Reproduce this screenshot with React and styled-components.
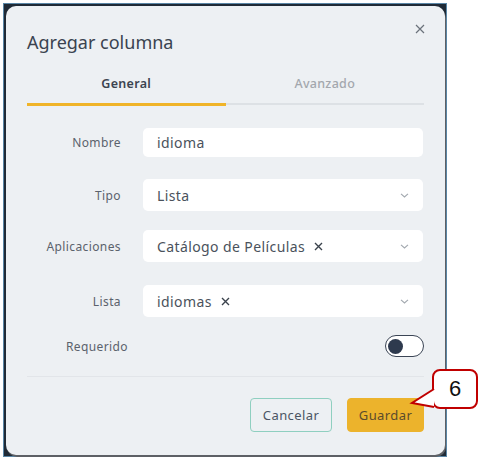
import React from 'react';
import styled, { createGlobalStyle } from 'styled-components';

const GlobalStyle = createGlobalStyle`
  html, body {
    margin: 0;
    padding: 0;
    background: #ffffff;
  }
  body {
    font-family: "Noto Sans", "DejaVu Sans", sans-serif;
  }
`;

const Stage = styled.div`
  position: relative;
  width: 483px;
  height: 464px;
  padding: 3px;
  box-sizing: border-box;
`;

const Backdrop = styled.div`
  width: 444px;
  height: 454px;
  box-sizing: border-box;
  background: #1f2a36;
  border: 1px solid #5a86a6;
  padding: 2px 1px 1px 2px;
`;

const Modal = styled.div`
  position: relative;
  height: 100%;
  box-sizing: border-box;
  background: #edf0f3;
  border-radius: 10px;
  box-shadow: 1px 2px 0 #5d6065;
  padding: 24px 21px 20px 21px;
  display: flex;
  flex-direction: column;
`;

const Title = styled.h2`
  margin: 0;
  font-size: 18px;
  font-weight: 400;
  color: #3a4350;
  line-height: 24px;
`;

const Close = styled.button`
  position: absolute;
  top: 16px;
  right: 18px;
  width: 14px;
  height: 14px;
  padding: 0;
  border: none;
  background: none;
  display: flex;
  align-items: center;
  justify-content: center;
`;

const Tabs = styled.div`
  display: flex;
  margin-top: 22px;
`;

const Tab = styled.div`
  flex: 1;
  text-align: center;
  font-size: 12.5px;
  letter-spacing: 0.3px;
  font-weight: ${({ $active }) => ($active ? 600 : 500)};
  color: ${({ $active }) => ($active ? '#3c4450' : '#a3a7ad')};
  padding-bottom: 11px;
  border-bottom: ${({ $active }) => ($active ? '3px solid #f0b429' : '2px solid #dde1e5')};
  margin-bottom: ${({ $active }) => ($active ? '0' : '1px')};
  line-height: 16px;
`;

const Form = styled.div`
  display: flex;
  flex-direction: column;
  margin-top: 22px;
`;

const Row = styled.div`
  display: grid;
  grid-template-columns: 94px 280px;
  column-gap: 22px;
  align-items: center;
  margin-bottom: ${({ $gap }) => $gap}px;
`;

const Label = styled.div`
  text-align: right;
  font-size: 12px;
  letter-spacing: 0.4px;
  color: #5b626c;
`;

const Field = styled.div`
  height: ${({ $h }) => $h || 32}px;
  background: #ffffff;
  border-radius: 5px;
  display: flex;
  align-items: center;
  padding: 0 14px;
  box-sizing: border-box;
  font-size: 14px;
  letter-spacing: 0.4px;
  color: #4a525c;
`;

const Value = styled.span`
  flex: 1;
  display: flex;
  align-items: center;
`;

const Chip = styled.span`
  display: inline-flex;
  align-items: center;
  gap: 9px;
`;

const ToggleRow = styled.div`
  display: flex;
  align-items: center;
  justify-content: space-between;
  height: 24px;
`;

const ToggleLabel = styled(Label)`
  width: 101px;
`;

const Switch = styled.div`
  width: 33px;
  height: 20px;
  border: 1px solid #3b4555;
  border-radius: 11px;
  background: #ffffff;
  display: flex;
  align-items: center;
  padding: 0 2px;
  box-sizing: content-box;
`;

const Knob = styled.div`
  width: 15px;
  height: 15px;
  border-radius: 50%;
  background: #2e3a4e;
`;

const Divider = styled.div`
  height: 1px;
  background: #e2e5e9;
  margin-top: 18px;
`;

const Footer = styled.div`
  display: flex;
  justify-content: flex-end;
  gap: 15px;
  margin-top: 21px;
`;

const Button = styled.button`
  height: 34px;
  padding: 0;
  border-radius: 4px;
  font-family: inherit;
  font-size: 13px;
  font-weight: 400;
  letter-spacing: 0.4px;
  box-sizing: border-box;
  border: 1px solid ${({ $primary }) => ($primary ? '#ecb32c' : '#8fcfc0')};
  background: ${({ $primary }) => ($primary ? '#ecb32c' : 'transparent')};
  color: ${({ $primary }) => ($primary ? '#5b4b2c' : '#4b5563')};
  width: ${({ $w }) => $w}px;
`;

const Callout = styled.div`
  position: absolute;
  left: 432px;
  top: 369px;
  width: 46px;
  height: 40px;
  border: 2px solid #c00000;
  border-radius: 8px;
  background: #ffffff;
  box-sizing: border-box;
  display: flex;
  align-items: center;
  justify-content: center;
  font-family: "Liberation Sans", Arial, sans-serif;
  font-size: 22px;
  color: #111111;
`;

const Pointer = styled.svg`
  position: absolute;
  left: 410px;
  top: 385px;
  overflow: visible;
`;

const Chevron = () => (
  <svg width="9" height="5" viewBox="0 0 9 5">
    <path d="M1 0.8 L4.5 4 L8 0.8" fill="none" stroke="#a2a8af" strokeWidth="1.1" />
  </svg>
);

const SmallX = () => (
  <svg width="9" height="9" viewBox="0 0 9 9">
    <path d="M1 1 L8 8 M8 1 L1 8" stroke="#3a424c" strokeWidth="1.4" />
  </svg>
);

const App = () => (
  <>
    <GlobalStyle />
    <Stage>
      <Backdrop>
        <Modal>
          <Close aria-label="Cerrar">
            <svg width="10" height="10" viewBox="0 0 10 10">
              <path d="M1 1 L9 9 M9 1 L1 9" stroke="#6b727b" strokeWidth="1.2" />
            </svg>
          </Close>
          <Title>Agregar columna</Title>
          <Tabs>
            <Tab $active>General</Tab>
            <Tab>Avanzado</Tab>
          </Tabs>
          <Form>
            <Row $gap={22}>
              <Label>Nombre</Label>
              <Field $h={29}>
                <Value>idioma</Value>
              </Field>
            </Row>
            <Row $gap={19}>
              <Label>Tipo</Label>
              <Field>
                <Value>Lista</Value>
                <Chevron />
              </Field>
            </Row>
            <Row $gap={23}>
              <Label>Aplicaciones</Label>
              <Field>
                <Value>
                  <Chip>Catálogo de Películas <SmallX /></Chip>
                </Value>
                <Chevron />
              </Field>
            </Row>
            <Row $gap={17}>
              <Label>Lista</Label>
              <Field>
                <Value>
                  <Chip>idiomas <SmallX /></Chip>
                </Value>
                <Chevron />
              </Field>
            </Row>
            <ToggleRow>
              <ToggleLabel>Requerido</ToggleLabel>
              <Switch>
                <Knob />
              </Switch>
            </ToggleRow>
          </Form>
          <Divider />
          <Footer>
            <Button $w={82}>Cancelar</Button>
            <Button $primary $w={77}>Guardar</Button>
          </Footer>
        </Modal>
      </Backdrop>
      <Callout>6</Callout>
      <Pointer width="26" height="24" viewBox="0 0 26 24">
        <path d="M24 4 L2 18 L24 22" fill="#ffffff" stroke="#c00000" strokeWidth="2" strokeLinejoin="miter" />
      </Pointer>
    </Stage>
  </>
);

export default App;
